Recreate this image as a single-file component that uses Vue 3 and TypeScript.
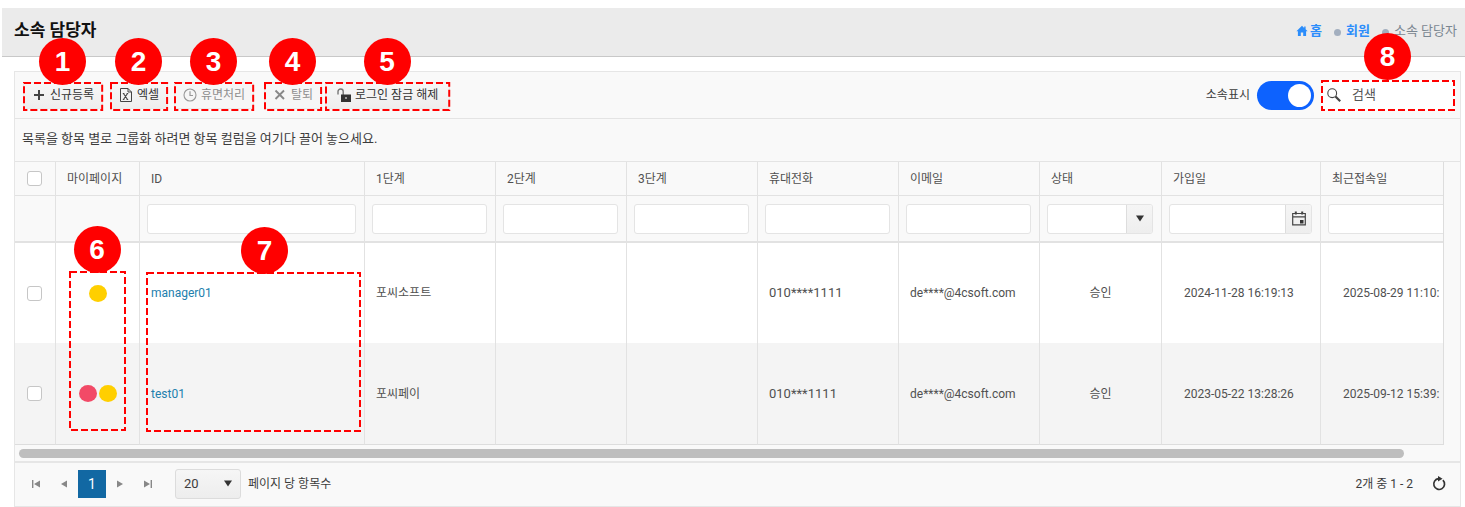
<script setup lang="ts">
import { ref } from 'vue'

interface Tool {
  id: number
  label: string
  icon: 'plus' | 'excel' | 'clock' | 'close' | 'unlock'
  disabled: boolean
}

interface Member {
  id: string
  dots: string[]
  level1: string
  phone: string
  email: string
  status: string
  joined: string
  lastVisit: string
}

const tools: Tool[] = [
  { id: 1, label: '신규등록', icon: 'plus', disabled: false },
  { id: 2, label: '엑셀', icon: 'excel', disabled: false },
  { id: 3, label: '휴면처리', icon: 'clock', disabled: true },
  { id: 4, label: '탈퇴', icon: 'close', disabled: true },
  { id: 5, label: '로그인 잠금 해제', icon: 'unlock', disabled: false },
]

const columns = [
  { key: 'id', label: 'ID', filter: 'text' },
  { key: 'l1', label: '1단계', filter: 'text' },
  { key: 'l2', label: '2단계', filter: 'text' },
  { key: 'l3', label: '3단계', filter: 'text' },
  { key: 'phone', label: '휴대전화', filter: 'text' },
  { key: 'email', label: '이메일', filter: 'text' },
  { key: 'status', label: '상태', filter: 'select' },
  { key: 'joined', label: '가입일', filter: 'date' },
  { key: 'last', label: '최근접속일', filter: 'text' },
]

const members: Member[] = [
  {
    id: 'manager01', dots: ['yellow'], level1: '포씨소프트', phone: '010****1111',
    email: 'de****@4csoft.com', status: '승인', joined: '2024-11-28 16:19:13', lastVisit: '2025-08-29 11:10:',
  },
  {
    id: 'test01', dots: ['red', 'yellow'], level1: '포씨페이', phone: '010***1111',
    email: 'de****@4csoft.com', status: '승인', joined: '2023-05-22 13:28:26', lastVisit: '2025-09-12 15:39:',
  },
]

const showAffiliation = ref(true)
const search = ref('')
const pageSize = ref('20')
</script>

<template>
  <div class="page">
    <header class="top">
      <h1>소속 담당자</h1>
      <nav class="crumbs" aria-label="경로">
        <a href="#" class="home">
          <svg width="12" height="12" viewBox="0 0 12 12"><path d="M6 0.8 0.4 6.2h1.5V11h2.9V7.6h2.4V11h2.9V6.2h1.5L9.6 4.2V1.6H8.2v1.3z" fill="currentColor" /></svg>홈</a>
        <i class="bullet"></i>
        <a href="#">회원</a>
        <i class="bullet"></i>
        <span>소속 담당자</span>
      </nav>
    </header>

    <main class="grid">
      <div class="toolbar">
        <div class="tools">
          <div v-for="t in tools" :key="t.id" class="mark">
            <button type="button" class="tool" :class="{ wide: t.id === 5 }" :disabled="t.disabled">
              <svg v-if="t.icon === 'plus'" width="14" height="14" viewBox="0 0 14 14"><path d="M7 2v10M2 7h10" stroke="#444" stroke-width="2" /></svg>
              <svg v-else-if="t.icon === 'excel'" width="14" height="14" viewBox="0 0 14 14" fill="none" stroke="#444"><path d="M1.5 0.5h7.5l3.5 3.5v9.5h-11z" /><path d="M9 0.5V4h3.5" /><path d="M4.5 5.5l4 6M8.5 5.5l-4 6M3.8 5.5h1.6M7.6 5.5h1.6M3.8 11.5h1.6M7.6 11.5h1.6" stroke-width="1.1" /></svg>
              <svg v-else-if="t.icon === 'clock'" width="14" height="14" viewBox="0 0 14 14" fill="none" stroke="#999"><circle cx="7" cy="7" r="6" stroke-width="1.1" /><path d="M7 3.2V7.5h3" stroke-width="1.2" /></svg>
              <svg v-else-if="t.icon === 'close'" width="14" height="14" viewBox="0 0 14 14"><path d="M2.5 2.5l8.5 8.5M11 2.5L2.5 11" stroke="#888" stroke-width="1.9" /></svg>
              <svg v-else width="14" height="14" viewBox="0 0 14 14"><path d="M1 6.5V3.6a2.6 2.6 0 0 1 5.2 0V7" fill="none" stroke="#777" stroke-width="1.4" /><path d="M4 6.5h10V14H4z" fill="#333" /><path d="M8 9h2v2H8z" fill="#999" /></svg>
              {{ t.label }}
            </button>
            <svg class="dash"><rect width="100%" height="100%" /></svg>
            <b class="badge">{{ t.id }}</b>
          </div>
        </div>
        <div class="options">
          <label class="switch-label" for="affiliation">소속표시</label>
          <input id="affiliation" v-model="showAffiliation" class="switch" type="checkbox" role="switch" />
          <div class="mark search">
            <svg width="14" height="14" viewBox="0 0 14 14" fill="none" stroke="#444"><circle cx="5.2" cy="5.2" r="4.4" stroke-width="1.1" /><path d="M8.5 8.5l4.7 4.7" stroke-width="2.2" /></svg>
            <input v-model="search" type="text" placeholder="검색" aria-label="검색" />
            <svg class="dash"><rect width="100%" height="100%" /></svg>
            <b class="badge">8</b>
          </div>
        </div>
      </div>

      <div class="grouping">목록을 항목 별로 그룹화 하려면 항목 컬럼을 여기다 끌어 놓으세요.</div>

      <div class="body">
        <div class="scroller">
          <table>
            <colgroup>
              <col class="w-check" /><col class="w-page" /><col class="w-id" /><col class="w-level" /><col class="w-level" /><col class="w-level" />
              <col class="w-contact" /><col class="w-contact" /><col class="w-status" /><col class="w-date" /><col class="w-date" />
            </colgroup>
            <thead>
              <tr class="titles">
                <th class="center"><input type="checkbox" aria-label="전체 선택" /></th>
                <th>마이페이지</th>
                <th v-for="c in columns" :key="c.key">{{ c.label }}</th>
              </tr>
              <tr class="filters">
                <td></td>
                <td></td>
                <td v-for="c in columns" :key="c.key">
                  <div class="filter">
                    <template v-if="c.filter === 'select'">
                      <select :aria-label="c.label"><option></option></select>
                      <span class="addon passive"><svg width="8" height="7" viewBox="0 0 8 7"><path d="M0 0.5h8L4 6.5z" fill="#333" /></svg></span>
                    </template>
                    <template v-else-if="c.filter === 'date'">
                      <input type="text" :aria-label="c.label" />
                      <button type="button" class="addon" aria-label="달력"><svg width="14" height="15" viewBox="0 0 14 15" fill="none" stroke="#444"><path d="M0.7 2.5h12.6v11.3H0.7zM0.7 5.8h12.6" stroke-width="1.2" /><path d="M3.8 0.5v3M10.2 0.5v3" stroke-width="2" /><path d="M8 9h3.5v3.5H8z" fill="#333" stroke="none" /></svg></button>
                    </template>
                    <input v-else type="text" :aria-label="c.label" />
                  </div>
                </td>
              </tr>
            </thead>
            <tbody>
              <tr v-for="(m, i) in members" :key="m.id">
                <td class="center"><input type="checkbox" :aria-label="m.id" /></td>
                <td class="center anchor">
                  <div class="dots"><i v-for="d in m.dots" :key="d" :class="d"></i></div>
                  <div v-if="i === 0" class="mark over-page">
                    <svg class="dash"><rect width="100%" height="100%" /></svg>
                    <b class="badge">6</b>
                  </div>
                </td>
                <td class="anchor">
                  <a href="#">{{ m.id }}</a>
                  <div v-if="i === 0" class="mark over-id">
                    <svg class="dash"><rect width="100%" height="100%" /></svg>
                    <b class="badge">7</b>
                  </div>
                </td>
                <td>{{ m.level1 }}</td>
                <td></td>
                <td></td>
                <td class="phone">{{ m.phone }}</td>
                <td>{{ m.email }}</td>
                <td class="center">{{ m.status }}</td>
                <td class="date">{{ m.joined }}</td>
                <td class="date">{{ m.lastVisit }}</td>
              </tr>
            </tbody>
          </table>
        </div>
        <div class="track"><div class="thumb"></div></div>
      </div>

      <footer class="pager">
        <button type="button" class="nav" aria-label="처음"><svg width="8" height="8" viewBox="0 0 8 8"><path d="M0 0h1.4v8H0zM8 0.4v7.2L2 4z" fill="#888" /></svg></button>
        <button type="button" class="nav" aria-label="이전"><svg width="6" height="8" viewBox="0 0 6 8"><path d="M6 0.4v7.2L0 4z" fill="#888" /></svg></button>
        <button type="button" class="nav current">1</button>
        <button type="button" class="nav" aria-label="다음"><svg width="6" height="8" viewBox="0 0 6 8"><path d="M0 0.4v7.2L6 4z" fill="#888" /></svg></button>
        <button type="button" class="nav" aria-label="마지막"><svg width="8" height="8" viewBox="0 0 8 8"><path d="M6.6 0H8v8H6.6zM0 0.4v7.2L6 4z" fill="#888" /></svg></button>
        <div class="size">
          <select id="page-size" v-model="pageSize"><option>20</option><option>50</option></select>
          <svg width="8" height="7" viewBox="0 0 8 7"><path d="M0 0.5h8L4 6.5z" fill="#333" /></svg>
        </div>
        <label for="page-size">페이지 당 항목수</label>
        <span class="total">2개 중 1 - 2</span>
        <button type="button" class="refresh" aria-label="새로고침"><svg width="14" height="15" viewBox="0 0 14 15"><path d="M10.9 4.2A5.4 5.4 0 1 1 6.6 2.7" fill="none" stroke="#333" stroke-width="1.7" /><path d="M6 0l4.6 2.7L6 5.4z" fill="#333" /></svg></button>
      </footer>
    </main>
  </div>
</template>

<style>
body {
  background: #fff;
}
</style>

<style scoped>
* {
  box-sizing: border-box;
}

.page {
  padding: 8px 0 0 2px;
  font: 12px/18px Roboto, 'Noto Sans CJK KR', sans-serif;
  color: #3c3c3c;
}

button,
input,
select {
  margin: 0;
  font: inherit;
  color: inherit;
}

svg {
  flex: none;
}

a {
  text-decoration: none;
}

.top {
  display: flex;
  align-items: center;
  justify-content: space-between;
  height: 49px;
  padding: 0 8px 4px 12px;
  background: #ebebeb;
  border-bottom: 1px solid #c8c8c8;
}

h1 {
  margin: 0;
  font-size: 17px;
  line-height: 24px;
  font-weight: 700;
  color: #111;
}

.crumbs {
  display: flex;
  align-items: center;
  padding-top: 2px;
  font-size: 13px;
  color: #7b8791;
}

.crumbs a {
  display: flex;
  align-items: center;
  gap: 2px;
  font-weight: 700;
  color: #2b8dfb;
}

.bullet {
  width: 7px;
  height: 7px;
  margin: 2px 5px 0 12px;
  border-radius: 50%;
  background: #a3afbf;
}

.grid {
  margin: 14px 4px 0 12px;
  border: 1px solid #e6e6e6;
  background: #f9f9f9;
}

.toolbar {
  display: flex;
  align-items: center;
  justify-content: space-between;
  height: 47px;
  padding: 0 5px 0 8px;
  border-bottom: 1px solid #e4e4e4;
}

.tools {
  display: grid;
  grid-template-columns: 87px 64px 90px 61px auto;
  justify-items: start;
}

.mark {
  position: relative;
}

.dash {
  position: absolute;
  inset: 1px;
  width: calc(100% - 2px);
  height: 100%;
  overflow: visible;
  pointer-events: none;
}

.dash rect {
  fill: none;
  stroke: #f00;
  stroke-width: 2px;
  stroke-dasharray: 7 3;
}

.badge {
  position: absolute;
  z-index: 2;
  left: 50%;
  top: -44px;
  width: 47px;
  height: 47px;
  margin-left: -24px;
  border-radius: 50%;
  background: #f00;
  color: #fff;
  font: 700 28px/48px 'Liberation Sans', sans-serif;
  text-align: center;
}

.tool {
  display: flex;
  align-items: center;
  gap: 4px;
  height: 27px;
  padding: 0 9px;
  border: 0;
  border-radius: 3px;
  background: linear-gradient(#f7f7f7, #eee);
  box-shadow: inset 0 0 0 1px #eaeaea;
  color: #333;
  white-space: nowrap;
}

.tool.wide {
  padding: 0 12px;
}

.tool:disabled {
  color: #8f8f8f;
  background: #f6f6f6;
}

.options {
  display: flex;
  align-items: center;
  gap: 7px;
}

.switch {
  appearance: none;
  width: 57px;
  height: 29px;
  padding: 3px;
  border-radius: 15px;
  background: #b5b5b5;
}

.switch::before {
  content: '';
  display: block;
  width: 23px;
  height: 23px;
  border-radius: 50%;
  background: #fff;
}

.switch:checked {
  background: #0d62fe;
}

.switch:checked::before {
  margin-left: auto;
}

.search {
  display: flex;
  align-items: center;
  gap: 11px;
  width: 134px;
  height: 31px;
  padding: 0 6px;
  background: #fff;
}

.search input {
  width: 90px;
  padding: 0;
  border: 0;
  outline: 0;
  background: none;
  font-size: 13px;
}

.search input::placeholder {
  color: #555;
}

.search .dash {
  height: calc(100% - 2px);
}

.search .badge {
  top: -47px;
}

.grouping {
  height: 43px;
  padding: 0 7px;
  border-bottom: 1px solid #e4e4e4;
  font-size: 13px;
  line-height: 40px;
}

.body {
  border-bottom: 2px solid #e6e6e6;
}

.scroller {
  margin-right: 16px;
  overflow: hidden;
  border-right: 1px solid #ddd;
}

table {
  width: 100%;
  min-width: 1465px;
  table-layout: fixed;
  border-collapse: separate;
  border-spacing: 0;
  color: #505050;
}

.w-check { width: 41px; }
.w-page { width: 84px; }
.w-id { width: 225px; }
.w-level { width: 131px; }
.w-contact { width: 141px; }
.w-status { width: 122px; }
.w-date { width: 159px; }

th,
td {
  padding: 0 11px;
  border-right: 1px solid #e2e2e2;
  font-weight: 400;
  text-align: left;
  white-space: nowrap;
}

.titles th {
  height: 34px;
  border-bottom: 1px solid #e2e2e2;
}

.filters td {
  height: 47px;
  padding: 0 8px 0 7px;
  border-bottom: 2px solid #e2e2e2;
}

tbody td {
  height: 100px;
  background: #fff;
}

tbody tr:nth-child(2) td {
  height: 102px;
  background: #f4f4f4;
  border-bottom: 1px solid #ddd;
}

th:first-child,
td:first-child {
  padding: 0 2px 0 0;
}

.center {
  text-align: center;
}

.phone {
  font-size: 13px;
}

tbody .date {
  padding-left: 22px;
}

tbody a {
  color: #2280ad;
}

input[type='checkbox']:not(.switch) {
  appearance: none;
  display: block;
  width: 15px;
  height: 15px;
  margin: 0 auto;
  border: 1px solid #c6c6c6;
  border-radius: 3px;
  background: #fff;
}

.filter {
  position: relative;
  display: flex;
  height: 30px;
  border: 1px solid #e4e4e4;
  border-radius: 3px;
  background: #fff;
  overflow: hidden;
}

.filter input,
.filter select {
  flex: 1;
  min-width: 0;
  padding: 0 6px;
  border: 0;
  outline: 0;
  background: none;
  appearance: none;
}

.addon {
  display: flex;
  align-items: center;
  justify-content: center;
  width: 26px;
  padding: 0;
  border: 0;
  border-left: 1px solid #ddd;
  background: linear-gradient(#f5f5f5, #eee);
}

.passive {
  pointer-events: none;
}

.anchor {
  position: relative;
}

.dots {
  display: flex;
  justify-content: center;
  gap: 2px;
}

.dots i {
  width: 18px;
  height: 17px;
  border-radius: 50%;
}

.dots .yellow {
  background: #ffcf00;
}

.dots .red {
  background: #f24a67;
}

.over-page,
.over-id {
  position: absolute;
  z-index: 1;
  pointer-events: none;
}

.over-page {
  top: 28px;
  left: 13px;
  width: 57px;
  height: 158px;
}

.over-id {
  top: 29px;
  left: 6px;
  width: 215px;
  height: 158px;
}

.over-page .badge,
.over-id .badge {
  top: -45px;
}

.over-id .badge {
  left: 119px;
}

.track {
  height: 16px;
  margin-right: 17px;
  padding: 4px 39px 3px 4px;
}

.thumb {
  height: 9px;
  border-radius: 5px;
  background: #bebebe;
}

.pager {
  display: flex;
  align-items: center;
  height: 43px;
  padding: 0 14px 2px 7px;
}

.nav,
.refresh {
  display: flex;
  align-items: center;
  justify-content: center;
  width: 28px;
  height: 28px;
  padding: 0;
  border: 0;
  background: none;
}

.current {
  background: #1268a3;
  color: #fff;
  font-size: 14px;
}

.size {
  position: relative;
  margin: 0 7px 0 13px;
}

.size select {
  appearance: none;
  display: block;
  width: 66px;
  height: 30px;
  padding: 0 8px;
  border: 1px solid #dcdcdc;
  border-radius: 3px;
  background: linear-gradient(#f6f6f6, #ededed);
  font-size: 13px;
}

.size svg {
  position: absolute;
  right: 9px;
  top: 11px;
  pointer-events: none;
}

.total {
  margin-left: auto;
  margin-right: 19px;
}

.refresh {
  width: 14px;
}
</style>
